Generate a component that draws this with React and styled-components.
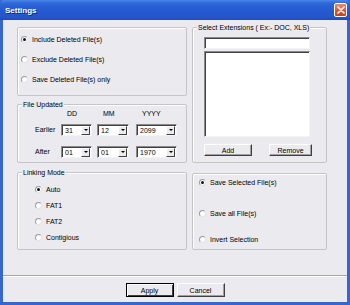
import React from "react";
import styled, { createGlobalStyle } from "styled-components";

const Global = createGlobalStyle`
  html, body { margin: 0; padding: 0; }
  body { width: 350px; height: 305px; overflow: hidden; font-family: "Liberation Sans", Arial, sans-serif; }
  * { box-sizing: border-box; }
`;

const Window = styled.div`
  width: 350px;
  height: 305px;
  display: flex;
  flex-direction: column;
  background: #3766cc;
`;

const TitleBar = styled.div`
  height: 20px;
  flex: none;
  display: flex;
  align-items: center;
  justify-content: space-between;
  padding: 0 3px 0 5px;
  background: linear-gradient(#4a86e8 0%, #2c66d8 18%, #2459cf 55%, #2456cb 85%, #1d4bbd 100%);
  border-radius: 4px 4px 0 0;
`;

const Title = styled.span`
  color: #fff;
  font-weight: bold;
  font-size: 8px;
  text-shadow: 1px 1px 0 #0b2a80;
`;

const CloseBtn = styled.div`
  width: 13px;
  height: 14px;
  border: 1px solid #fff;
  border-radius: 2px;
  background: linear-gradient(#ec8a6a, #d9532f 60%, #c8411f);
  display: flex;
  align-items: center;
  justify-content: center;
`;

const Client = styled.div`
  flex: 1;
  margin: 0 3px 3px 3px;
  background: #ebeaee;
  display: flex;
  flex-direction: column;
`;

const Content = styled.div`
  flex: 1;
  display: flex;
  gap: 5px;
  padding: 7px 0 0 14px;
  font-size: 7px;
  color: #000;
`;

const Column = styled.div`
  width: ${(p) => p.$w}px;
  display: flex;
  flex-direction: column;
`;

const Group = styled.div`
  position: relative;
  height: ${(p) => p.$h}px;
  margin-top: ${(p) => p.$mt || 0}px;
  border: 1px solid #c5c4cb;
  border-radius: 2px;
  box-shadow: 1px 1px 0 #fff inset;
  padding: ${(p) => p.$pad};
  display: flex;
  flex-direction: column;
  gap: ${(p) => p.$gap || 0}px;
`;

const Legend = styled.span`
  position: absolute;
  top: -5px;
  left: ${(p) => p.$l}px;
  padding: 0 1px;
  background: #ebeaee;
  line-height: 9px;
  white-space: nowrap;
`;

const RadioRow = styled.div`
  display: flex;
  align-items: center;
  gap: ${(p) => p.$gap || 4}px;
  height: 10px;
  margin-top: ${(p) => p.$mt || 0}px;
  white-space: nowrap;
`;

const RadioDot = styled.span`
  width: 7px;
  height: 7px;
  flex: none;
  border-radius: 50%;
  background: #fdfdfd;
  border: 1px solid;
  border-color: #9a9aa0 #e4e4e8 #e4e4e8 #9a9aa0;
  display: flex;
  align-items: center;
  justify-content: center;
  &::after {
    content: "";
    width: 3px;
    height: 3px;
    border-radius: 50%;
    background: ${(p) => (p.$on ? "#111" : "transparent")};
  }
`;

const Radio = ({ on, children, mt, gap }) => (
  <RadioRow $mt={mt} $gap={gap}>
    <RadioDot $on={on} />
    <span>{children}</span>
  </RadioRow>
);

const DateGrid = styled.div`
  display: grid;
  grid-template-columns: 26px 36px 39px 41px;
  grid-template-rows: 14px 22px 12px;
  align-items: start;
`;

const Header = styled.span`
  padding-left: 6px;
  line-height: 8px;
`;

const RowLabel = styled.span`
  line-height: 10px;
`;

const Combo = styled.div`
  width: ${(p) => p.$w}px;
  height: 12px;
  background: #fff;
  border: 1px solid;
  border-color: #8a8a8a #f4f4f4 #f4f4f4 #8a8a8a;
  box-shadow: 1px 1px 0 #404040 inset;
  display: flex;
  align-items: center;
  justify-content: space-between;
  padding: 1px 1px 0 3px;
  font-size: 7px;
`;

const ComboBtn = styled.span`
  width: 9px;
  height: 9px;
  background: #ebeaee;
  border: 1px solid;
  border-color: #fff #404040 #404040 #fff;
  display: flex;
  align-items: center;
  justify-content: center;
  margin-top: -1px;
  &::after {
    content: "";
    border-left: 2px solid transparent;
    border-right: 2px solid transparent;
    border-top: 2px solid #000;
  }
`;

const Field = styled.div`
  width: 106px;
  height: ${(p) => p.$h}px;
  margin-top: ${(p) => p.$mt || 0}px;
  background: #fff;
  border: 1px solid;
  border-color: #8a8a8a #f4f4f4 #f4f4f4 #8a8a8a;
  box-shadow: 1px 1px 0 #404040 inset;
`;

const BtnRow = styled.div`
  display: flex;
  justify-content: ${(p) => p.$justify || "flex-start"};
  gap: ${(p) => p.$gap || 0}px;
  margin-top: ${(p) => p.$mt || 0}px;
  width: ${(p) => (p.$w ? p.$w + "px" : "auto")};
`;

const Button = styled.button`
  width: ${(p) => p.$w}px;
  height: 14px;
  padding: 0;
  font-family: "Liberation Sans", Arial, sans-serif;
  font-size: 7px;
  color: #000;
  background: #ebeaee;
  border: 1px solid;
  border-color: ${(p) => (p.$default ? "#000" : "#fff #404040 #404040 #fff")};
  box-shadow: ${(p) =>
    p.$default
      ? "inset 1px 1px 0 #fff, inset -1px -1px 0 #404040"
      : "inset -1px -1px 0 #a0a0a0"};
  display: flex;
  align-items: center;
  justify-content: center;
`;

const Footer = styled.div`
  flex: none;
  display: flex;
  flex-direction: column;
`;

const Separator = styled.div`
  height: 2px;
  border-top: 1px solid #a9a9ad;
  border-bottom: 1px solid #fff;
`;

const FooterButtons = styled.div`
  display: flex;
  justify-content: center;
  gap: 3px;
  padding: 6px 0 5px 0;
`;

export default function App() {
  return (
    <>
      <Global />
      <Window>
        <TitleBar>
          <Title>Settings</Title>
          <CloseBtn>
            <svg width="8" height="8" viewBox="0 0 8 8">
              <path d="M1 1L7 7M7 1L1 7" stroke="#fff" strokeWidth="1.6" strokeLinecap="round" />
            </svg>
          </CloseBtn>
        </TitleBar>
        <Client>
          <Content>
            <Column $w={170}>
              <Group $h={69} $pad="6px 0 0 3px" $gap={10}>
                <Radio on>Include Deleted File(s)</Radio>
                <Radio>Exclude Deleted File(s)</Radio>
                <Radio>Save Deleted File(s) only</Radio>
              </Group>
              <Group $h={59} $mt={8} $pad="5px 0 0 17px">
                <Legend $l={4}>File Updated</Legend>
                <DateGrid>
                  <span />
                  <Header>DD</Header>
                  <Header>MM</Header>
                  <Header>YYYY</Header>
                  <RowLabel style={{ marginTop: 1 }}>Earlier</RowLabel>
                  <Combo $w={31}>31<ComboBtn /></Combo>
                  <Combo $w={32}>12<ComboBtn /></Combo>
                  <Combo $w={41}>2099<ComboBtn /></Combo>
                  <RowLabel style={{ marginTop: 1 }}>After</RowLabel>
                  <Combo $w={31}>01<ComboBtn /></Combo>
                  <Combo $w={32}>01<ComboBtn /></Combo>
                  <Combo $w={41}>1970<ComboBtn /></Combo>
                </DateGrid>
              </Group>
              <Group $h={78} $mt={9} $pad="11px 0 0 17px" $gap={6}>
                <Legend $l={4}>Linking Mode</Legend>
                <Radio on>Auto</Radio>
                <Radio>FAT1</Radio>
                <Radio>FAT2</Radio>
                <Radio>Contigious</Radio>
              </Group>
            </Column>
            <Column $w={135}>
              <Group $h={136} $pad="9px 0 0 11px">
                <Legend $l={4}>Select Extensions ( Ex:- DOC, XLS)</Legend>
                <Field $h={12} />
                <Field $h={86} $mt={2} />
                <BtnRow $mt={7} $w={108} $justify="space-between">
                  <Button $w={48} style={{ height: 12 }}>Add</Button>
                  <Button $w={43} style={{ height: 12 }}>Remove</Button>
                </BtnRow>
              </Group>
              <Group $h={77} $mt={10} $pad="3px 0 0 6px">
                <Radio on>Save Selected File(s)</Radio>
                <Radio mt={21}>Save all File(s)</Radio>
                <Radio mt={16}>Invert Selection</Radio>
              </Group>
            </Column>
          </Content>
          <Footer>
            <Separator />
            <FooterButtons>
              <Button $w={48} $default>Apply</Button>
              <Button $w={48}>Cancel</Button>
            </FooterButtons>
          </Footer>
        </Client>
      </Window>
    </>
  );
}
